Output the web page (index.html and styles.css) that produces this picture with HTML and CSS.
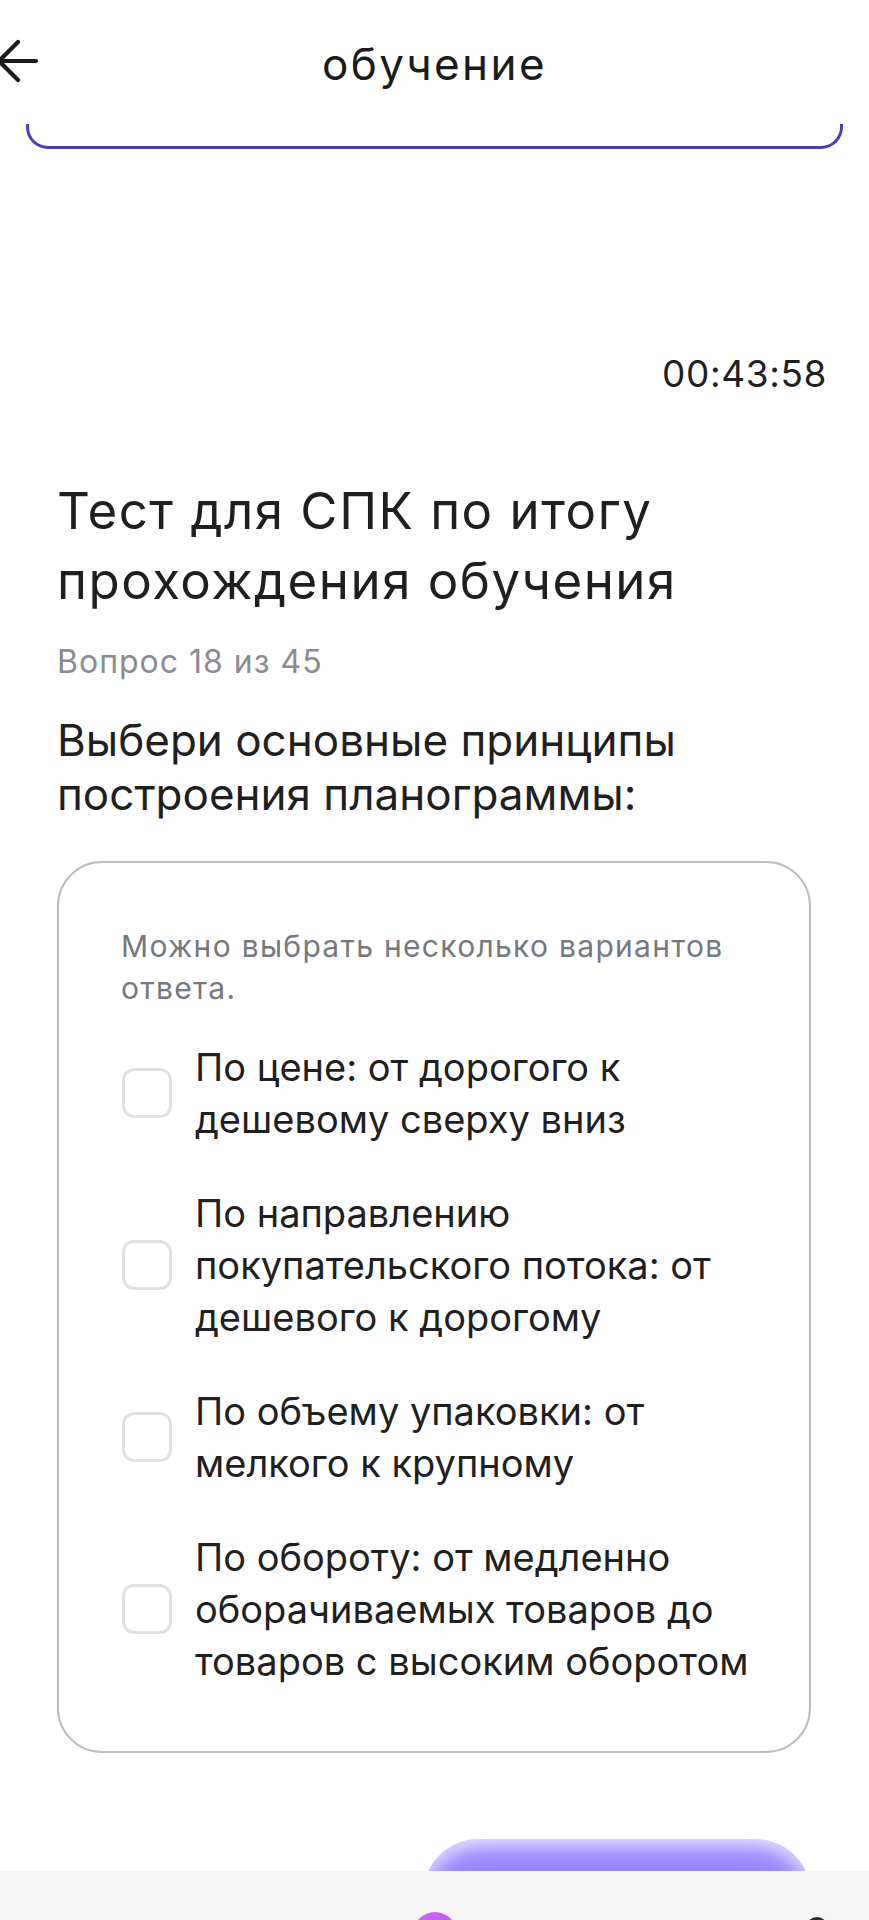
FILE: index.html
```html
<!DOCTYPE html>
<html lang="ru">
<head>
<meta charset="utf-8">
<title>обучение</title>
<link rel="stylesheet" href="styles.css">
</head>
<body>
<header class="appbar">
  <svg class="back" width="40" height="44" viewBox="0 0 40 44" aria-hidden="true">
    <path d="M36 22H2M18 3L-1 22L18 41" fill="none" stroke="#1b1b1b" stroke-width="4.2" stroke-linecap="round" stroke-linejoin="round"/>
  </svg>
  <h1 class="appbar-title">обучение</h1>
</header>
<div class="prev-box"></div>
<main class="content">
  <div class="timer">00:43:58</div>
  <h2 class="test-title">Тест для СПК по итогу прохождения обучения</h2>
  <div class="counter">Вопрос 18 из 45</div>
  <p class="question">Выбери основные принципы построения планограммы:</p>
  <section class="card">
    <p class="hint">Можно выбрать несколько вариантов ответа.</p>
    <ul class="options">
      <li class="option"><span class="check"></span><span class="opt-text">По цене: от дорогого к дешевому сверху вниз</span></li>
      <li class="option"><span class="check"></span><span class="opt-text">По направлению покупательского потока: от дешевого к дорогому</span></li>
      <li class="option"><span class="check"></span><span class="opt-text">По объему упаковки: от мелкого к крупному</span></li>
      <li class="option"><span class="check"></span><span class="opt-text">По обороту: от медленно оборачиваемых товаров до товаров с высоким оборотом</span></li>
    </ul>
  </section>
  <div class="actions"><button class="next-btn" type="button"></button></div>
</main>
<nav class="bottom-bar">
  <span class="nav-dot"></span>
  <span class="nav-icon"></span>
</nav>
</body>
</html>
```
FILE: styles.css
```css
html, body {
  margin: 0;
  padding: 0;
  background: #ffffff;
}
body {
  font-family: "Inter", "Roboto", "Noto Sans", sans-serif;
  color: #1f1f1f;
  width: 869px;
  overflow: hidden;
}
.appbar {
  height: 124px;
  display: flex;
  align-items: center;
  justify-content: center;
  background: #fff;
  position: relative;
}
.back {
  position: absolute;
  left: 0;
  top: 39px;
}
.appbar-title {
  margin: 0;
  font-weight: 400;
  font-size: 44px;
  line-height: 50px;
  color: #1b1b1b;
  letter-spacing: 2.4px;
  padding-top: 4px;
}
.prev-box {
  height: 22px;
  margin: 0 26px;
  border: 3px solid #4b3db3;
  border-top: none;
  border-radius: 0 0 22px 22px;
}
.content {
  padding: 0 58px 0 57px;
}
.timer {
  margin-top: 203px;
  text-align: right;
  margin-right: -16px;
  font-size: 37px;
  line-height: 44px;
  letter-spacing: 0.6px;
  color: #1f1f1f;
}
.test-title {
  margin: 80px 0 0;
  font-size: 51px;
  line-height: 70px;
  font-weight: 400;
  letter-spacing: 1.5px;
  color: #1f1f1f;
}
.counter {
  margin-top: 26px;
  font-size: 32px;
  line-height: 40px;
  letter-spacing: 1px;
  color: #8a8b90;
}
.question {
  margin: 31px 0 0;
  font-size: 44px;
  line-height: 54px;
  color: #1f1f1f;
}
.card {
  margin-top: 40px;
  border: 2px solid #b9bcc3;
  border-radius: 45px;
  padding: 62px 40px 64px 62px;
}
.hint {
  margin: 0;
  font-size: 30px;
  line-height: 42px;
  letter-spacing: 1.3px;
  color: #75787e;
}
.options {
  list-style: none;
  margin: 32px 0 0;
  padding: 0;
  display: flex;
  flex-direction: column;
  gap: 42px;
}
.option {
  display: flex;
  align-items: center;
  gap: 23px;
}
.check {
  flex: none;
  width: 50px;
  height: 50px;
  box-sizing: border-box;
  border: 3px solid #e1e1e3;
  border-radius: 12px;
  margin-left: 1px;
}
.opt-text {
  font-size: 38px;
  line-height: 52px;
  color: #1f1f1f;
}
.actions {
  margin-top: 86px;
  display: flex;
  justify-content: flex-end;
}
.next-btn {
  width: 388px;
  height: 112px;
  border: none;
  border-radius: 56px;
  background: linear-gradient(180deg, #ad9fff 0%, #8c73ff 45%, #8468fb 100%);
  box-shadow: inset 0 8px 14px rgba(255, 255, 255, 0.35), inset 14px 0 20px rgba(255,255,255,0.3), inset -14px 0 20px rgba(255,255,255,0.3);
}
.bottom-bar {
  position: fixed;
  left: 0;
  right: 0;
  bottom: 0;
  height: 49px;
  background: #f6f6f7;
  overflow: hidden;
}
.nav-dot {
  position: absolute;
  left: 413px;
  top: 41px;
  width: 44px;
  height: 44px;
  border-radius: 50%;
  background: linear-gradient(135deg, #d36cf5, #a64df0);
}
.nav-icon {
  position: absolute;
  left: 806px;
  top: 46px;
  width: 22px;
  height: 22px;
  border-radius: 50%;
  background: #2a2a2a;
}
```
